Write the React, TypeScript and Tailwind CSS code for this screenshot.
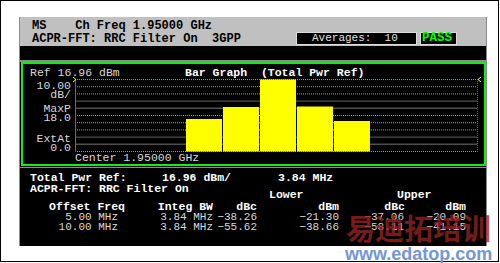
import React from "react";

const mono = "font-['Liberation_Mono',monospace]";

const gridStyles = [
  "dot", "dot", "dot", "solid", "solid", "dot", "dot", "dot", "solid", "solid", "dot",
];

const bars = [
  { x: 111, top: 40 },
  { x: 148, top: 28 },
  { x: 185, top: 0.5 },
  { x: 222, top: 27.5 },
  { x: 259, top: 42 },
];

const headWidths = ["w-[105px]", "w-[88px]", "w-[44px]", "w-[82px]", "w-[66px]", "w-[61px]"];
const dataWidths = ["w-[98px]", "w-[95px]", "w-[44px]", "w-[82px]", "w-[65px]", "w-[62px]"];

const rows = [
  ["5.00 MHz", "3.84 MHz", "−38.26", "−21.30", "−37.06", "−20.09"],
  ["10.00 MHz", "3.84 MHz", "−55.62", "−38.66", "−58.11", "−41.15"],
];

function BarChart() {
  return (
    <svg width={409} height={73} className="overflow-visible">
      {gridStyles.map((s, i) => {
        const y = 0.5 + i * 7.2;
        return s === "dot" ? (
          <line key={i} x1={0} x2={402} y1={y} y2={y} stroke="#9a9a9a" strokeDasharray="1 1" />
        ) : (
          <line key={i} x1={0} x2={402} y1={y} y2={y} stroke="#4e4e4e" strokeWidth={1.4} />
        );
      })}
      <line x1={0.5} x2={0.5} y1={0} y2={73} stroke="#6a6a6a" />
      <line x1={402.5} x2={402.5} y1={0} y2={73} stroke="#6a6a6a" strokeDasharray="1 1" />
      {bars.map((b) => (
        <rect key={b.x} x={b.x} y={b.top} width={36} height={72.5 - b.top} fill="#ffff00" />
      ))}
      <polyline points="-2,-2 1,0.5 -2,3" fill="none" stroke="#ffff00" strokeWidth={1} />
      <polyline points="406,-2 403,0.5 406,3" fill="none" stroke="#ffff00" strokeWidth={1} />
    </svg>
  );
}

export default function App() {
  return (
    <div className="relative w-[500px] h-[263px] bg-white overflow-hidden">
      <div className="w-[499px] h-[262px] border border-black pt-[16px] pl-[18px]">
        <div className={`w-[468px] h-[229px] bg-black border-x border-[#8a8a8a] flex flex-col ${mono}`}>
          {/* header */}
          <div className="h-[29px] bg-[#c0c0c0] pl-[12px] text-black font-bold text-[12px]">
            <div className="pt-[3px] leading-[12px] whitespace-pre">MS    Ch Freq 1.95000 GHz</div>
            <div className="flex items-center h-[13px]">
              <span className="w-[264px] whitespace-pre leading-[13px] pt-[1px]">ACPR-FFT: RRC Filter On  3GPP</span>
              <div className="w-[121px] h-[13px] bg-black border border-[#dcdcdc] pl-[15px] text-[11px] font-normal text-[#e0e0e0] leading-[11px] whitespace-pre">
                Averages:  10
              </div>
              <div className="ml-[3px] w-[37px] h-[13px] bg-black border border-[#dcdcdc] pl-[1px] text-[12.5px] text-[#00ff00] leading-[11px]">
                PASS
              </div>
            </div>
          </div>
          <div className="h-[14px]" />
          <div className="h-[2px] bg-[#8c8c8c]" />

          {/* bar graph window */}
          <div className="h-[104px] ml-[1px] border-2 border-[#11ee11] text-[11.5px]">
            <div className="flex pt-[3px] pl-[7px] leading-[12px]">
              <span className="w-[155px] text-[#d8d8d8]">Ref 16.96 dBm</span>
              <span className="font-bold text-white whitespace-pre">Bar Graph  (Total Pwr Ref)</span>
            </div>
            <div className="flex h-[73px] pl-[7px]">
              <div className="w-[45px] pr-[4px] pt-[2px] text-right text-[#d8d8d8] leading-[9px] flex flex-col">
                <span>10.00</span>
                <span>dB/</span>
                <span className="mt-[5px]">MaxP</span>
                <span>18.0</span>
                <span className="mt-[12px]">ExtAt</span>
                <span>0.0</span>
              </div>
              <BarChart />
            </div>
            <div className="pl-[52px] leading-[11px] text-[#d8d8d8]">Center 1.95000 GHz</div>
          </div>
          <div className="h-[1px]" />
          <div className="h-[1px] bg-[#8c8c8c]" />

          {/* results */}
          <div className="flex-1 pt-[4px] text-[11.5px]">
            <div className="flex pl-[10px] leading-[11px] font-bold text-white">
              <span className="w-[132px]">Total Pwr Ref:</span>
              <span className="w-[116px]">16.96 dBm/</span>
              <span>3.84 MHz</span>
            </div>
            <div className="flex font-bold text-white leading-[11px]">
              <span className="w-[249px] pl-[10px]">ACPR-FFT: RRC Filter On</span>
              <span className="w-[128px] pt-[6px]">Lower</span>
              <span className="pt-[6px]">Upper</span>
            </div>
            <div className="flex mt-[1px] leading-[11px] font-bold text-white">
              {["Offset Freq", "Integ BW", "dBc", "dBm", "dBc", "dBm"].map((h, i) => (
                <span key={i} className={`${headWidths[i]} text-right whitespace-pre`}>{h}</span>
              ))}
            </div>
            {rows.map((r) => (
              <div key={r[0]} className="flex leading-[10px] text-[11px] text-[#d8d8d8]">
                {r.map((c, i) => (
                  <span key={i} className={`${dataWidths[i]} text-right whitespace-pre`}>{c}</span>
                ))}
              </div>
            ))}
          </div>
        </div>
      </div>

      {/* watermark */}
      <div className="absolute left-[346px] top-[213px] text-[29px] leading-none font-bold text-[rgba(150,35,35,0.78)] font-['Noto_Sans_CJK_SC',sans-serif]">
        易迪拓培训
      </div>
      <div className="absolute left-[345px] top-[245px] text-[18px] leading-none font-bold text-[#7396d6] font-['Liberation_Sans',sans-serif]">
        www.edatop.com
      </div>
    </div>
  );
}
